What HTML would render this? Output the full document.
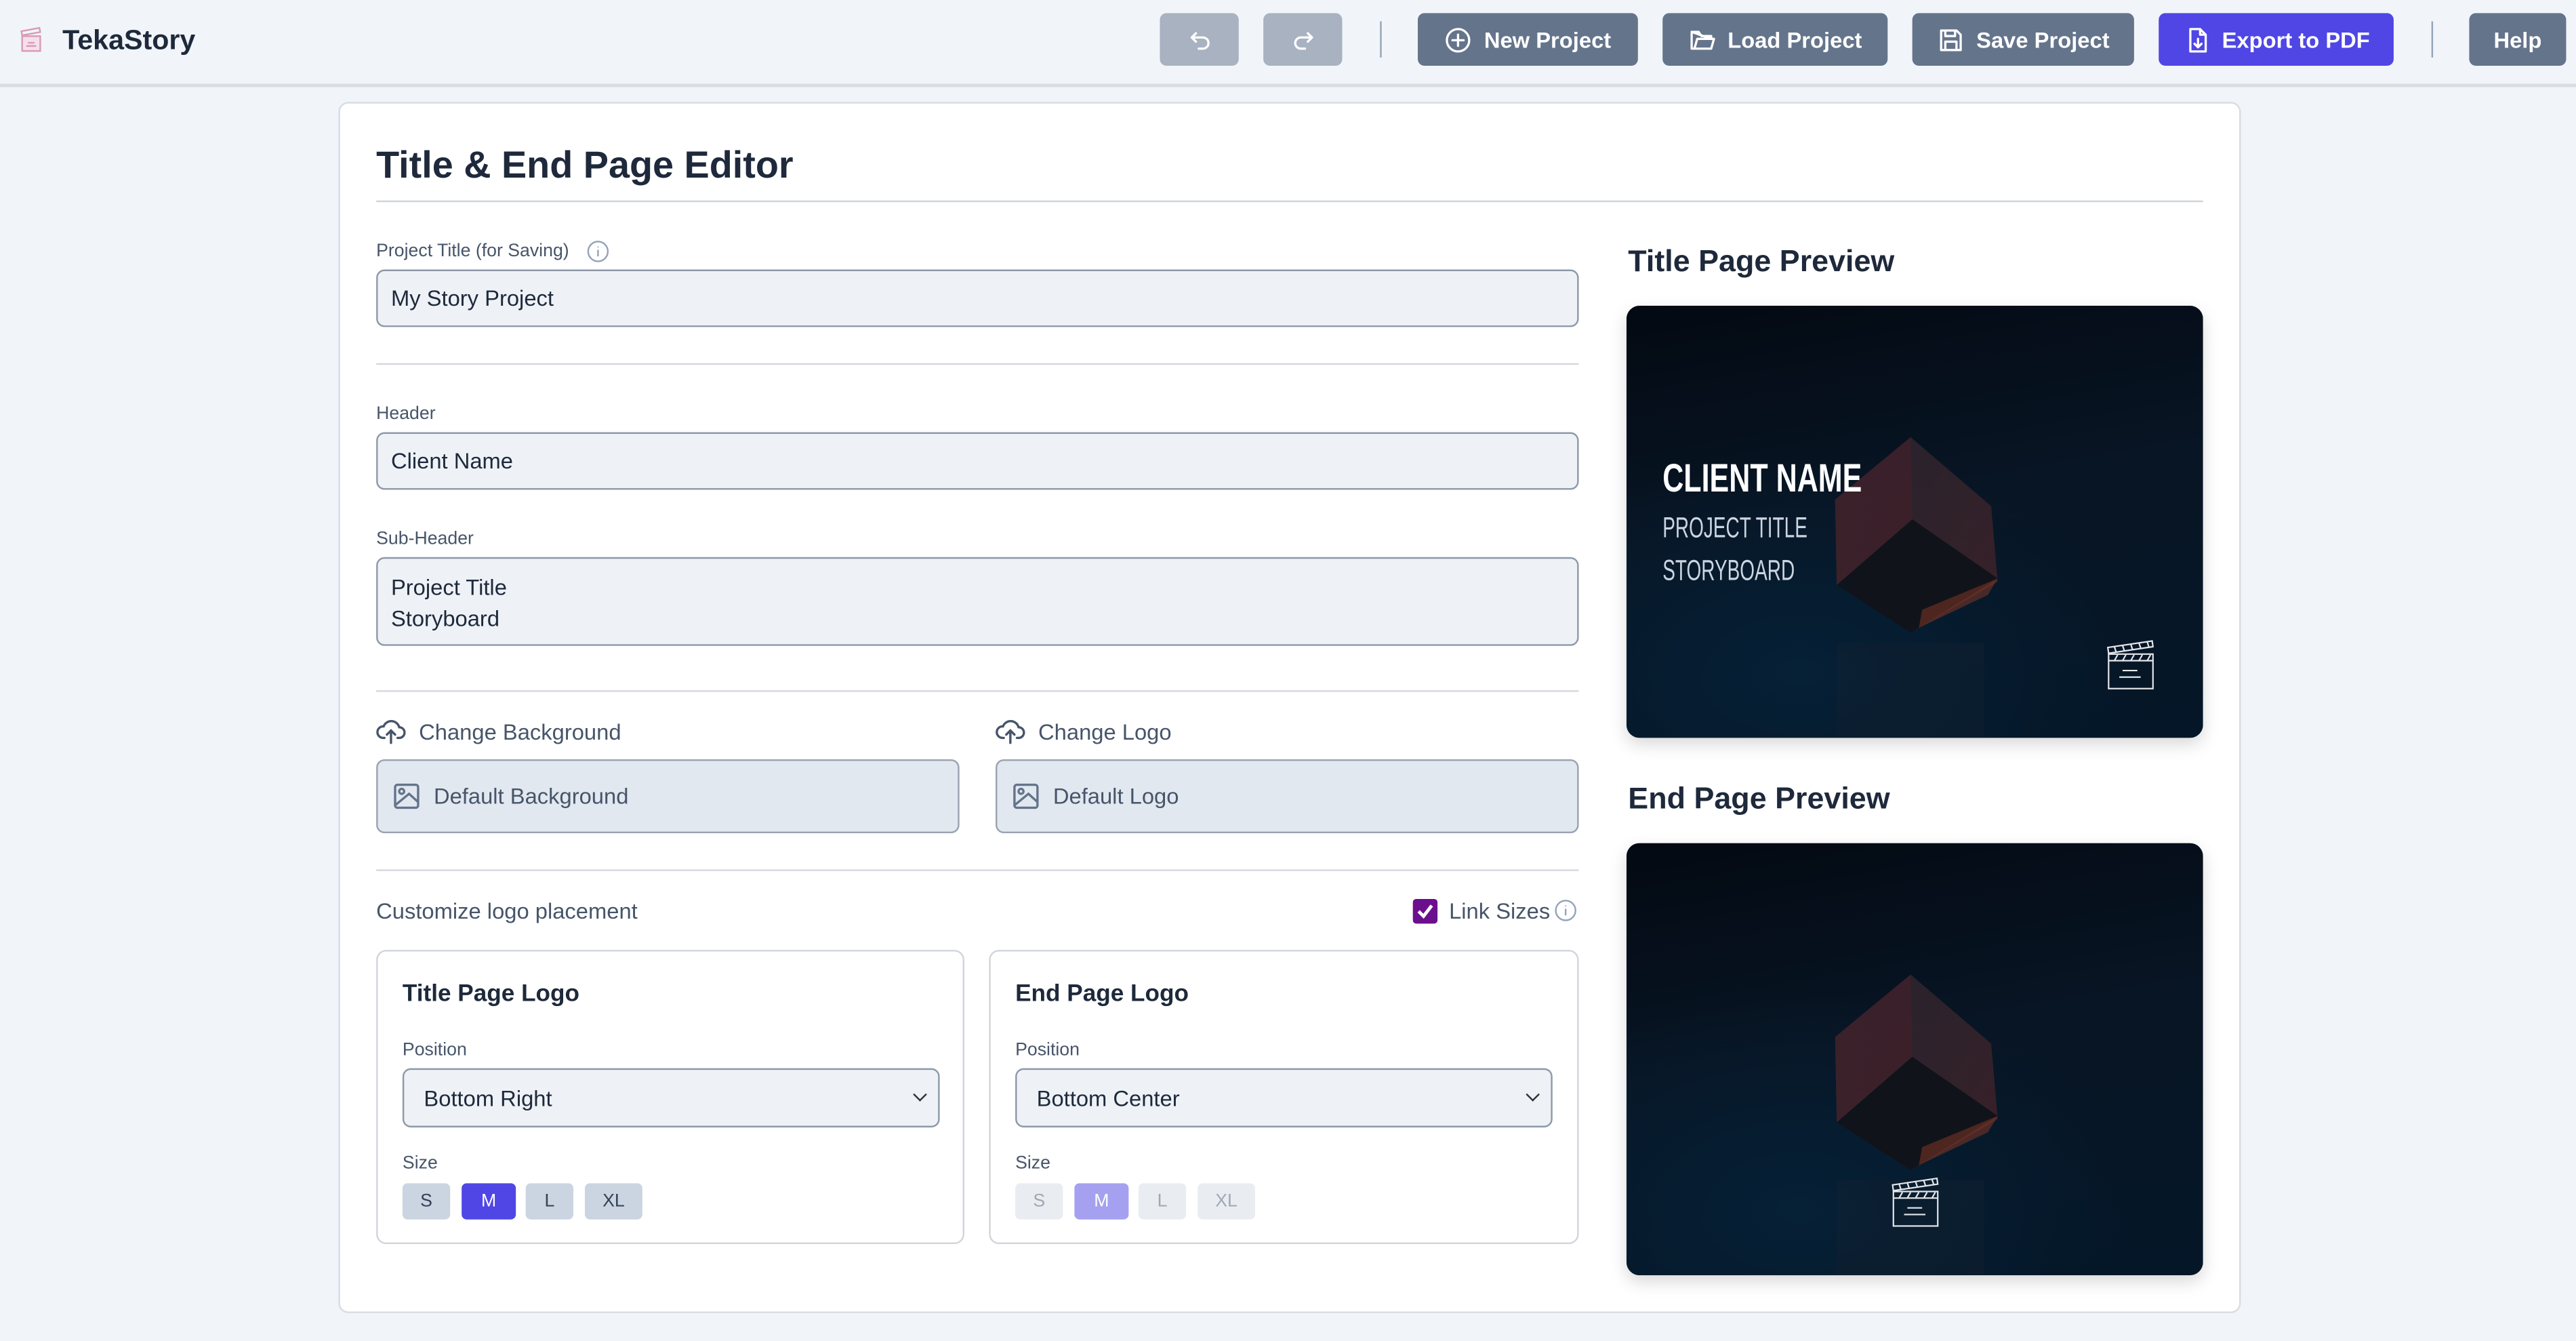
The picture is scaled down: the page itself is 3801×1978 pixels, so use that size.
<!DOCTYPE html>
<html><head><meta charset="utf-8">
<style>
*{box-sizing:border-box;margin:0;padding:0}
html,body{width:3801px;height:1977px;overflow:hidden;background:#f1f5f9}
#w{position:absolute;left:0;top:0;width:1568px;height:816px;transform:scale(2.42411);transform-origin:0 0;font-family:"Liberation Sans",sans-serif;color:#334155}
.a{position:absolute}
.btn{position:absolute;top:8px;height:32px;border-radius:4px;background:#64748b;color:#fff;font-weight:bold;font-size:13.5px;display:flex;align-items:center;justify-content:center;gap:7px}
.btn svg{width:17px;height:17px;fill:none;stroke:#fff;stroke-width:1.6;stroke-linecap:round;stroke-linejoin:round}
.vd{position:absolute;top:13px;width:1px;height:22px;background:#94a3b8}
.lbl{position:absolute;font-size:11px;color:#475569}
.inp{position:absolute;left:229px;width:732px;background:#eef2f7;border:1px solid #8e99a9;border-radius:5px;font-size:13.5px;color:#1e293b;padding-left:8px}
.hr{position:absolute;left:229px;width:732px;height:1px;background:#d4d8de}
.file{position:absolute;top:462px;height:45px;background:#e2e8f0;border:1px solid #9aa3b0;border-radius:5px;font-size:13.5px;color:#475569;display:flex;align-items:center;padding-left:9px;gap:8px}
.panel{position:absolute;top:578px;height:179px;border:1px solid #d1d5db;border-radius:6px;background:#fff}
.panel h3{position:absolute;left:15px;top:18px;font-size:14.5px;color:#1e293b}
.panel .p{position:absolute;left:15px;top:54px;font-size:11px;color:#475569}
.panel .sel{position:absolute;left:15px;top:71px;width:327px;height:36px;background:#eef2f7;border:1px solid #8e99a9;border-radius:5px;font-size:13.5px;color:#1e293b;padding:10px 0 0 12px}
.panel .sel:after{content:"";position:absolute;right:8px;top:12px;width:5px;height:5px;border-right:1.2px solid #333;border-bottom:1.2px solid #333;transform:rotate(45deg)}
.panel .s{position:absolute;left:15px;top:123px;font-size:11px;color:#475569}
.sz{position:absolute;top:141px;height:22px;border-radius:3px;background:#cbd5e1;font-size:11px;color:#334155;display:flex;align-items:center;justify-content:center}
.prev{position:absolute;left:990px;width:351px;height:263px;border-radius:8px;overflow:hidden;box-shadow:0 4px 10px rgba(0,0,0,.15);background:radial-gradient(ellipse 60% 50% at 30% 85%,#062036 0%,rgba(0,0,0,0) 100%),linear-gradient(170deg,#030912 0%,#081524 45%,#041627 100%)}
.h2{position:absolute;left:991px;font-size:18.5px;font-weight:bold;color:#1e293b}
.cond{font-family:"Liberation Sans Narrow","Liberation Sans",sans-serif;position:absolute;left:22px;transform-origin:0 0;white-space:nowrap}
</style></head><body><div id="w">
<div class="a" style="left:0;top:51px;width:1568px;height:2px;background:#d8dde4"></div>
<svg class="a" style="left:12px;top:16px" width="14" height="16" viewBox="0 0 14 16" fill="none" stroke="#d79bb8" stroke-width="1"><path d="M1 3 L12 1 L12.5 3.5 L1.5 5.5Z"/><rect x="1.5" y="6" width="11" height="9" fill="#f5e0ea"/><path d="M4 12h6M5 10h4"/></svg>
<div class="a" style="left:38px;top:15px;font-size:17px;font-weight:bold;color:#1e293b">TekaStory</div>
<div class="btn" style="left:706px;width:48px;background:#a9b2c1"><svg viewBox="0 0 20 20"><path d="M7 5 L4 8 L7 11 M4 8 H12 A4 4 0 0 1 12 16 H9"/></svg></div>
<div class="btn" style="left:769px;width:48px;background:#a9b2c1"><svg viewBox="0 0 20 20"><path d="M13 5 L16 8 L13 11 M16 8 H8 A4 4 0 0 0 8 16 H11"/></svg></div>
<div class="vd" style="left:840px"></div>
<div class="btn" style="left:863px;width:134px"><svg viewBox="0 0 20 20"><circle cx="10" cy="10" r="8"/><path d="M10 6v8M6 10h8"/></svg>New Project</div>
<div class="btn" style="left:1012px;width:137px"><svg viewBox="0 0 20 20"><path d="M2 5 V16 H16 L18 9 H6 L4 16 M16 9 V7 H9 L7 4 H2 Z"/></svg>Load Project</div>
<div class="btn" style="left:1164px;width:135px"><svg viewBox="0 0 20 20"><path d="M3 3 H14 L17 6 V17 H3 Z M6 3 V7 H13 V3 M6 17 V11 H14 V17"/></svg>Save Project</div>
<div class="btn" style="left:1314px;width:143px;background:#4f46e5"><svg viewBox="0 0 20 20"><path d="M5 2 H12 L16 6 V18 H5 Z M12 2 V6 H16 M10.5 9 V15 M8 12.5 L10.5 15 L13 12.5"/></svg>Export to PDF</div>
<div class="vd" style="left:1480px"></div>
<div class="btn" style="left:1503px;width:59px">Help</div>

<div class="a" style="left:206px;top:62px;width:1158px;height:737px;background:#fff;border:1px solid #d7dde5;border-radius:6px"></div>
<div class="a" style="left:229px;top:87px;font-size:23px;font-weight:bold;color:#1e293b">Title &amp; End Page Editor</div>
<div class="a" style="left:229px;top:122px;width:1112px;height:1px;background:#cfd4da"></div>

<div class="lbl" style="left:229px;top:147px">Project Title (for Saving)</div>
<svg class="a" style="left:357px;top:146px" width="14" height="14" viewBox="0 0 14 14" fill="none" stroke="#94a3b8" stroke-width="1"><circle cx="7" cy="7" r="6"/><path d="M7 6v4M7 4v.5"/></svg>
<div class="inp" style="top:164px;height:35px;padding-top:9px">My Story Project</div>
<div class="hr" style="top:221px"></div>
<div class="lbl" style="left:229px;top:246px">Header</div>
<div class="inp" style="top:263px;height:35px;padding-top:9px">Client Name</div>
<div class="lbl" style="left:229px;top:322px">Sub-Header</div>
<div class="inp" style="top:339px;height:54px;padding-top:9px;line-height:18.5px">Project Title<br>Storyboard</div>
<div class="hr" style="top:420px"></div>

<svg class="a" style="left:229px;top:437px" width="18" height="16" viewBox="0 0 18 16" fill="none" stroke="#475569" stroke-width="1.4" stroke-linecap="round"><path d="M5 12 H4 A3.5 3.5 0 0 1 4.5 5 A5 5 0 0 1 14 5.5 A3 3 0 0 1 14 12 H13 M9 15 V8 M6.5 10 L9 7.5 L11.5 10"/></svg>
<div class="a" style="left:255px;top:438px;font-size:13.5px;color:#475569">Change Background</div>
<svg class="a" style="left:606px;top:437px" width="18" height="16" viewBox="0 0 18 16" fill="none" stroke="#475569" stroke-width="1.4" stroke-linecap="round"><path d="M5 12 H4 A3.5 3.5 0 0 1 4.5 5 A5 5 0 0 1 14 5.5 A3 3 0 0 1 14 12 H13 M9 15 V8 M6.5 10 L9 7.5 L11.5 10"/></svg>
<div class="a" style="left:632px;top:438px;font-size:13.5px;color:#475569">Change Logo</div>
<div class="file" style="left:229px;width:355px"><svg width="17" height="17" viewBox="0 0 17 17" fill="none" stroke="#64748b" stroke-width="1.4"><rect x="1.5" y="1.5" width="14" height="14" rx="1.5"/><circle cx="5.5" cy="5.5" r="1.5"/><path d="M1.5 14 L10 7 L15.5 12"/></svg>Default Background</div>
<div class="file" style="left:606px;width:355px"><svg width="17" height="17" viewBox="0 0 17 17" fill="none" stroke="#64748b" stroke-width="1.4"><rect x="1.5" y="1.5" width="14" height="14" rx="1.5"/><circle cx="5.5" cy="5.5" r="1.5"/><path d="M1.5 14 L10 7 L15.5 12"/></svg>Default Logo</div>
<div class="hr" style="top:529px"></div>

<div class="a" style="left:229px;top:547px;font-size:13.5px;color:#475569">Customize logo placement</div>
<div class="a" style="left:860px;top:547px;width:15px;height:15px;border-radius:2px;background:#6b0f8e"></div>
<svg class="a" style="left:860px;top:547px" width="15" height="15" viewBox="0 0 15 15" fill="none" stroke="#fff" stroke-width="2"><path d="M3.5 7.5 L6.5 10.5 L11.5 4"/></svg>
<div class="a" style="left:882px;top:547px;font-size:13.5px;color:#475569">Link Sizes</div>
<svg class="a" style="left:946px;top:547px" width="14" height="14" viewBox="0 0 14 14" fill="none" stroke="#94a3b8" stroke-width="1"><circle cx="7" cy="7" r="6"/><path d="M7 6v4M7 4v.5"/></svg>

<div class="panel" style="left:229px;width:358px"><h3>Title Page Logo</h3><div class="p">Position</div><div class="sel">Bottom Right</div><div class="s">Size</div>
<div class="sz" style="left:15px;width:29px">S</div><div class="sz" style="left:51px;width:33px;background:#4f46e5;color:#fff">M</div><div class="sz" style="left:90px;width:29px">L</div><div class="sz" style="left:126px;width:35px">XL</div></div>
<div class="panel" style="left:602px;width:359px"><h3>End Page Logo</h3><div class="p">Position</div><div class="sel">Bottom Center</div><div class="s">Size</div>
<div class="sz" style="left:15px;width:29px;background:#e9edf2;color:#a0a8b5">S</div><div class="sz" style="left:51px;width:33px;background:#a5a0ef;color:#fff">M</div><div class="sz" style="left:90px;width:29px;background:#e9edf2;color:#a0a8b5">L</div><div class="sz" style="left:126px;width:35px;background:#e9edf2;color:#a0a8b5">XL</div></div>

<div class="h2" style="top:148px">Title Page Preview</div>
<div class="prev" style="top:186px">
<svg class="a" style="left:0;top:0" width="351" height="263" viewBox="0 0 351 263"><defs><linearGradient id="g1" x1="0" y1="0" x2="1" y2="1"><stop offset="0" stop-color="#2e2a33"/><stop offset="1" stop-color="#4a2226"/></linearGradient></defs>
<polygon points="173,80 222,122 226,168 173,199 128,170 127,118" fill="url(#g1)" opacity=".75"/>
<polygon points="173,80 174,130 128,170 127,118" fill="#40202a" opacity=".75"/>
<polygon points="174,130 226,166 173,199 128,170" fill="#0a1018" opacity=".85"/>
<polygon points="180,185 226,166 220,176 178,196" fill="#8a3a24" opacity=".5"/>
<rect x="128" y="205" width="90" height="58" fill="#1a2330" opacity=".25"/></svg>
<div class="cond" style="top:92px;font-size:24px;font-weight:bold;color:#fff;transform:scaleX(.74)">CLIENT NAME</div>
<div class="cond" style="top:125px;font-size:17.5px;color:#cbd5e1;transform:scaleX(.66)">PROJECT TITLE</div>
<div class="cond" style="top:151px;font-size:17.5px;color:#cbd5e1;transform:scaleX(.66)">STORYBOARD</div>
<svg class="a" style="left:292px;top:203px" width="30" height="31" viewBox="0 0 30 31" fill="none" stroke="#e5e7eb" stroke-width=".9"><path d="M1 5 L28 1 L28.5 4.5 L1.5 8.5Z M5 4.5 L6 7.5 M10 3.8 L11 6.8 M15 3 L16 6 M20 2.3 L21 5.3 M25 1.6 L26 4.6"/><rect x="1.5" y="9" width="27" height="21"/><path d="M1.5 13 H28.5 M5 13 L7 9.5 M10 13 L12 9.5 M15 13 L17 9.5 M20 13 L22 9.5 M25 13 L27 9.5 M10 19 H19 M8 23 H21"/></svg>
</div>
<div class="h2" style="top:475px">End Page Preview</div>
<div class="prev" style="top:513px">
<svg class="a" style="left:0;top:0" width="351" height="263" viewBox="0 0 351 263">
<polygon points="173,80 222,122 226,168 173,199 128,170 127,118" fill="url(#g1)" opacity=".75"/>
<polygon points="173,80 174,130 128,170 127,118" fill="#40202a" opacity=".75"/>
<polygon points="174,130 226,166 173,199 128,170" fill="#0a1018" opacity=".85"/>
<polygon points="180,185 226,166 220,176 178,196" fill="#8a3a24" opacity=".5"/>
<rect x="128" y="205" width="90" height="58" fill="#1a2330" opacity=".25"/></svg>
<svg class="a" style="left:161px;top:203px" width="30" height="31" viewBox="0 0 30 31" fill="none" stroke="#e5e7eb" stroke-width=".9"><path d="M1 5 L28 1 L28.5 4.5 L1.5 8.5Z M5 4.5 L6 7.5 M10 3.8 L11 6.8 M15 3 L16 6 M20 2.3 L21 5.3 M25 1.6 L26 4.6"/><rect x="1.5" y="9" width="27" height="21"/><path d="M1.5 13 H28.5 M5 13 L7 9.5 M10 13 L12 9.5 M15 13 L17 9.5 M20 13 L22 9.5 M25 13 L27 9.5 M10 19 H19 M8 23 H21"/></svg>
</div>
</div></body></html>
